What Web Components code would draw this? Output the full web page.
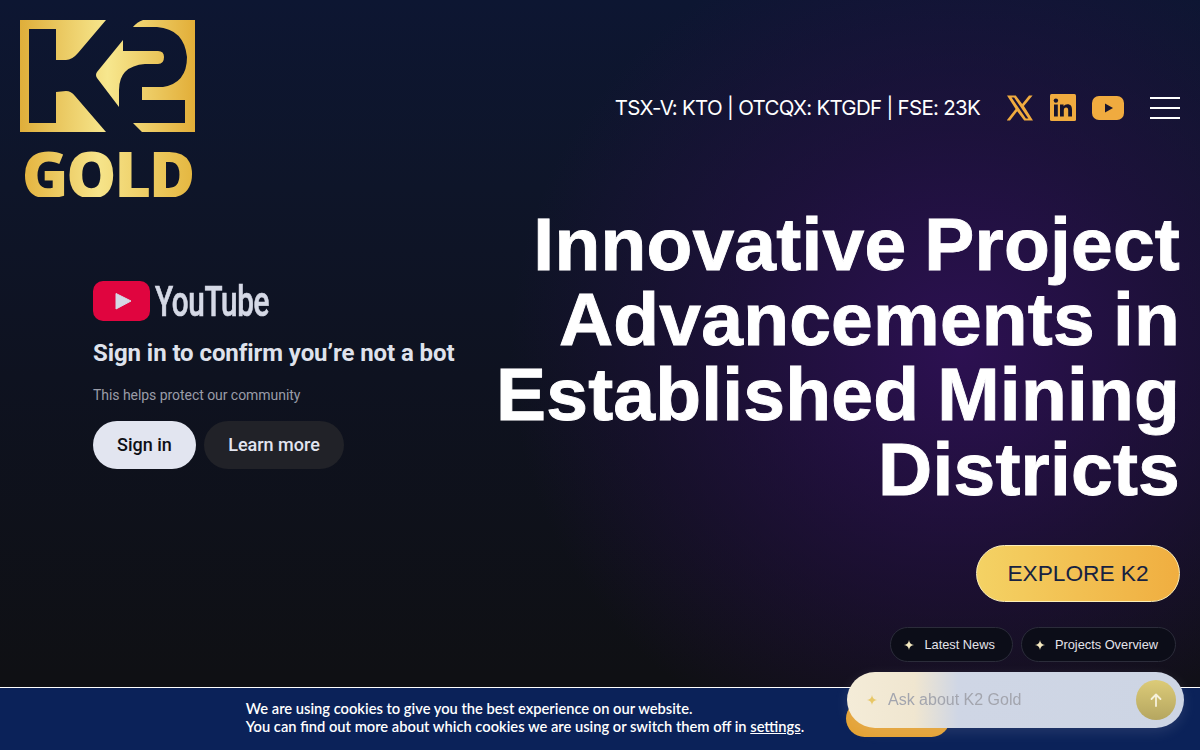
<!DOCTYPE html>
<html lang="en">
<head>
<meta charset="utf-8">
<title>K2 Gold</title>
<style>
  html, body { margin: 0; height: 100%; overflow: hidden; background: #0e0f15; }
</style>
</head>
<body>
<k2-hero>
  <k2-header slot="header"></k2-header>
  <yt-gate slot="left"></yt-gate>
  <hero-copy slot="right"></hero-copy>
</k2-hero>
<cookie-bar></cookie-bar>
<chat-box></chat-box>

<script>
class K2Hero extends HTMLElement {
  constructor() {
    super();
    const shadowRoot = this.attachShadow({ mode: 'open' });
    shadowRoot.innerHTML = `
      <style>
        :host {
          display: block;
          height: 750px;
          overflow: hidden;
          background:
            radial-gradient(ellipse 450px 430px at 960px 350px, rgba(46, 16, 84, .95), rgba(38, 15, 70, .6) 50%, rgba(30, 14, 50, 0) 100%),
            linear-gradient(180deg, #0d1632 0%, #0e1529 25%, #0e1220 50%, #0f1014 90%);
        }
        .main {
          display: grid;
          grid-template-columns: 480px 1fr;
        }
      </style>
      <slot name="header"></slot>
      <div class="main">
        <slot name="left"></slot>
        <slot name="right"></slot>
      </div>
    `;
  }
}

class K2Logo extends HTMLElement {
  constructor() {
    super();
    const shadowRoot = this.attachShadow({ mode: 'open' });
    shadowRoot.innerHTML = `
      <style>
        :host { display: flex; flex-direction: column; width: 175px; }
        svg { display: block; }
        .gold {
          box-sizing: border-box;
          height: 65px;
          padding-top: 19px;
          text-align: center;
          font: 900 63px/46px "Noto Sans", "Open Sans", sans-serif;
          letter-spacing: -2px;
          background: linear-gradient(90deg, #e3b23c 0%, #f6e48a 45%, #e4b63f 100%);
          -webkit-background-clip: text;
          background-clip: text;
          color: transparent;
        }
      </style>
      <svg width="175" height="112" viewBox="20 20 175 112">
        <defs>
          <linearGradient id="g" gradientUnits="userSpaceOnUse" x1="20" y1="0" x2="195" y2="0">
            <stop offset="0" stop-color="#dfae3a"/>
            <stop offset=".5" stop-color="#f7e78e"/>
            <stop offset="1" stop-color="#e2ae38"/>
          </linearGradient>
        </defs>
        <path fill="url(#g)" d="M20 20H106L78 53Q72 60 66 60H56V29H29V123H56V92L66 91Q71 91 75 96L106 132H20Z"/>
        <path fill="url(#g)" d="M123 40L97 72Q95 75 97 78L119 107V90Q119 66 145 64H158Q164 64 164 57Q164 51 158 51H123Z"/>
        <path fill="url(#g)" d="M143 20H195V132H142L133 123H185V100H142V87H163Q187 83 187 57Q184 29 157 27H133Q137 22 143 20Z"/>
      </svg>
      <div class="gold">GOLD</div>
    `;
  }
}

class K2Header extends HTMLElement {
  constructor() {
    super();
    const shadowRoot = this.attachShadow({ mode: 'open' });
    shadowRoot.innerHTML = `
      <style>
        :host {
          display: flex;
          justify-content: space-between;
          align-items: center;
          padding: 20px 20px 10px;
        }
        .right { display: flex; align-items: center; margin-bottom: 2px; }
        .ticker {
          font: 400 20.5px/28px Inter, sans-serif;
          letter-spacing: -.72px;
          color: #fff;
          margin-right: 27px;
        }
        .social { display: flex; align-items: center; margin-right: 26px; }
        .social svg + svg { margin-left: 17px; }
        .social svg:last-child { margin-left: 16px; }
        svg { display: block; }
        .menu { display: flex; flex-direction: column; gap: 8px; width: 30px; }
        .menu span { display: block; height: 2px; background: #fff; }
      </style>
      <k2-logo></k2-logo>
      <div class="right">
        <div class="ticker">TSX-V: KTO | OTCQX: KTGDF | FSE: 23K</div>
        <div class="social">
          <svg width="26" height="26" viewBox="0 0 26 26">
            <path fill="#f0ab3f" fill-rule="evenodd" d="M0 .5H8.8L15.2 8.9 22 .5H25.6L16.9 11 26 25.5H17.2L10.2 16.2 3 25.5H-.4L8.6 14ZM4.6 2.6 18.9 23.4H21.4L7.1 2.6Z"/>
          </svg>
          <svg width="26" height="27" viewBox="0 0 26 27">
            <rect width="26" height="27" rx="1.5" fill="#f0ab3f"/>
            <rect x="4" y="10.5" width="3.8" height="12" fill="#16142f"/>
            <circle cx="5.9" cy="6.6" r="2.2" fill="#16142f"/>
            <path fill="#16142f" d="M10 10.5H13.6V12.2C14.4 10.9 15.8 10.2 17.4 10.2 20.8 10.2 22 12.3 22 15.7V22.5H18.2V16.6C18.2 14.8 17.7 13.6 16.1 13.6 14.5 13.6 13.8 14.8 13.8 16.6V22.5H10Z"/>
          </svg>
          <svg width="32" height="24" viewBox="0 0 32 24">
            <rect width="32" height="24" rx="7" fill="#f0ab3f"/>
            <path fill="#16142f" d="M13 7.5 21 12 13 16.5Z"/>
          </svg>
        </div>
        <div class="menu"><span></span><span></span><span></span></div>
      </div>
    `;
  }
}

class YtGate extends HTMLElement {
  constructor() {
    super();
    const shadowRoot = this.attachShadow({ mode: 'open' });
    shadowRoot.innerHTML = `
      <style>
        :host {
          display: block;
          padding: 74px 0 0 93px;
          font-family: Roboto, sans-serif;
        }
        .logo { display: flex; align-items: center; height: 40px; gap: 5px; }
        svg { display: block; }
        .word {
          font: 500 43px/40px Roboto, sans-serif;
          color: #d5d9e6;
          display: inline-block;
          transform: scaleX(.69);
          transform-origin: 0 50%;
          letter-spacing: -.5px;
          -webkit-text-stroke: .7px #d5d9e6;
        }
        h2 {
          margin: 18px 0 0;
          font: 700 24px/28px Roboto, sans-serif;
          letter-spacing: -.08px;
          color: #dfe2ec;
          white-space: nowrap;
        }
        p {
          margin: 18px 0 0;
          font: 400 14px/20px Roboto, sans-serif;
          letter-spacing: -.05px;
          color: #9a9ca8;
        }
        .buttons { display: flex; gap: 8px; margin-top: 16px; }
        button {
          border: 0;
          height: 48px;
          border-radius: 24px;
          font: 500 18px/48px Roboto, sans-serif;
          padding: 0;
        }
        .primary { width: 103px; background: #e2e5f0; color: #0e0f15; }
        .second { width: 140px; background: #212228; color: #e2e5f0; }
      </style>
      <div class="logo">
        <svg width="57" height="40" viewBox="0 0 57 40">
          <rect width="57" height="40" rx="10" fill="#e0053f"/>
          <path fill="#d5d9e6" stroke="#d5d9e6" stroke-linejoin="round" d="M23 12.5 38 20 23 28Z"/>
        </svg>
        <span class="word">YouTube</span>
      </div>
      <h2>Sign in to confirm you’re not a bot</h2>
      <p>This helps protect our community</p>
      <div class="buttons">
        <button class="primary">Sign in</button>
        <button class="second">Learn more</button>
      </div>
    `;
  }
}

class HeroCopy extends HTMLElement {
  constructor() {
    super();
    const shadowRoot = this.attachShadow({ mode: 'open' });
    shadowRoot.innerHTML = `
      <style>
        :host {
          display: flex;
          flex-direction: column;
          align-items: flex-end;
          padding-right: 20px;
        }
        h1 {
          margin: 0;
          font: 700 75px/75px "Liberation Sans", Arial, sans-serif;
          color: #fff;
          text-align: right;
          letter-spacing: .2px;
          word-spacing: -3px;
          -webkit-text-stroke: .9px #fff;
          width: 700px;
        }
        .explore {
          margin-top: 38px;
          box-sizing: border-box;
          width: 204px;
          height: 57px;
          border: 1px solid #fbeeb8;
          border-radius: 29px;
          background: linear-gradient(90deg, #f4d264, #f0ae40);
          font: 400 22.7px/55px "Liberation Sans", Arial, sans-serif;
          color: #172241;
          text-align: center;
        }
        .chips { display: flex; gap: 8px; margin: 25px 4px 0 0; }
      </style>
      <h1>Innovative Project Advancements in Established Mining Districts</h1>
      <div class="explore">EXPLORE K2</div>
      <div class="chips">
        <chat-chip>Latest News</chat-chip>
        <chat-chip>Projects Overview</chat-chip>
      </div>
    `;
  }
}

class ChatChip extends HTMLElement {
  constructor() {
    super();
    const shadowRoot = this.attachShadow({ mode: 'open' });
    shadowRoot.innerHTML = `
      <style>
        :host {
          display: inline-flex;
          align-items: center;
          box-sizing: border-box;
          height: 35px;
          padding: 0 17px 0 13px;
          gap: 10px;
          border: 1px solid #2b2c3a;
          border-radius: 18px;
          background: #0c0d18;
          font: 400 12.8px/1 "Liberation Sans", Arial, sans-serif;
          color: #e4e4ea;
          white-space: nowrap;
        }
        svg { display: block; }
        .label { padding-top: 2px; }
      </style>
      <svg width="10" height="10" viewBox="0 0 10 10">
        <path fill="#f5e9c0" d="M5 0C5.4 3 7 4.6 10 5 7 5.4 5.4 7 5 10 4.6 7 3 5.4 0 5 3 4.6 4.6 3 5 0Z"/>
      </svg>
      <span class="label"><slot></slot></span>
    `;
  }
}

class CookieBar extends HTMLElement {
  constructor() {
    super();
    const shadowRoot = this.attachShadow({ mode: 'open' });
    shadowRoot.innerHTML = `
      <style>
        :host {
          position: fixed;
          left: 0;
          right: 0;
          bottom: 0;
          height: 63px;
          box-sizing: border-box;
          padding: 0 4px 2px 0;
          border-top: 1px solid #fff;
          background: #0b2259;
          display: flex;
          justify-content: center;
          align-items: center;
          gap: 42px;
          font: 600 14.7px/18px Lato, sans-serif;
          color: #fff;
        }
        .text { margin-top: -2px; }
        a { color: inherit; text-decoration: underline; }
        .accept { width: 104px; height: 37px; border-radius: 19px; background: #e5a334; }
      </style>
      <div class="text">We are using cookies to give you the best experience on our website.<br>You can find out more about which cookies we are using or switch them off in <a>settings</a>.</div>
      <div class="accept"></div>
    `;
  }
}

class ChatBox extends HTMLElement {
  constructor() {
    super();
    const shadowRoot = this.attachShadow({ mode: 'open' });
    shadowRoot.innerHTML = `
      <style>
        :host {
          position: fixed;
          right: 16px;
          bottom: 22px;
          width: 337px;
          height: 56px;
          box-sizing: border-box;
          padding: 0 8px 0 20px;
          border-radius: 28px;
          display: flex;
          align-items: center;
          gap: 11px;
          background: linear-gradient(90deg, #f4ecd8 0%, #f0e6d0 20%, #cfd6e5 33%, #cdd5e4 100%);
          box-shadow: 0 4px 14px rgba(220, 225, 240, .12);
          font: 400 16px/1 "Liberation Sans", Arial, sans-serif;
          color: #a3a5ae;
        }
        svg { display: block; flex: none; }
        .text { flex: 1; }
        .send {
          width: 40px;
          height: 40px;
          border-radius: 50%;
          background: linear-gradient(180deg, #dccb78, #b5a660);
          display: flex;
          align-items: center;
          justify-content: center;
        }
      </style>
      <svg width="10" height="10" viewBox="0 0 10 10">
        <path fill="#e8c765" d="M5 0C5.4 3 7 4.6 10 5 7 5.4 5.4 7 5 10 4.6 7 3 5.4 0 5 3 4.6 4.6 3 5 0Z"/>
      </svg>
      <span class="text">Ask about K2 Gold</span>
      <div class="send">
        <svg width="12" height="14" viewBox="0 0 12 14">
          <path fill="none" stroke="#f6f1dc" stroke-width="1.8" stroke-linecap="round" stroke-linejoin="round" d="M6 13V2M1.5 6 6 1.5 10.5 6"/>
        </svg>
      </div>
    `;
  }
}

customElements.define('k2-hero', K2Hero);
customElements.define('k2-logo', K2Logo);
customElements.define('k2-header', K2Header);
customElements.define('yt-gate', YtGate);
customElements.define('hero-copy', HeroCopy);
customElements.define('chat-chip', ChatChip);
customElements.define('cookie-bar', CookieBar);
customElements.define('chat-box', ChatBox);
</script>
</body>
</html>
